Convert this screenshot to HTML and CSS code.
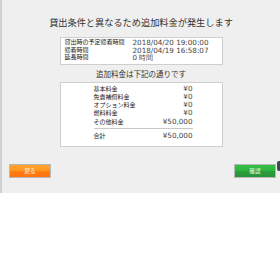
FILE: index.html
```html
<!DOCTYPE html>
<html lang="ja">
<head>
  <meta charset="utf-8">
  <meta name="viewport" content="width=device-width, initial-scale=1">
  <title>追加料金</title>
  <link rel="stylesheet" href="styles.css">
</head>
<body>
  <div class="panel">
    <h1 class="title">貸出条件と異なるため追加料金が発生します</h1>

    <div class="box time-box">
      <div class="time-row"><span>貸出時の予定帰着時間</span><span class="num">2018/04/20 19:00:00</span></div>
      <div class="time-row"><span>帰着時間</span><span class="num">2018/04/19 16:58:07</span></div>
      <div class="time-row"><span>延長時間</span><span class="num">0 時間</span></div>
    </div>

    <h2 class="subtitle">追加料金は下記の通りです</h2>

    <div class="box fee-box">
      <div class="fee-row"><span>基本料金</span><span class="num">¥0</span></div>
      <div class="fee-row"><span>免責補償料金</span><span class="num">¥0</span></div>
      <div class="fee-row"><span>オプション料金</span><span class="num">¥0</span></div>
      <div class="fee-row"><span>燃料料金</span><span class="num">¥0</span></div>
      <div class="fee-row"><span>その他料金</span><span class="num">¥50,000</span></div>
      <div class="fee-row total"><span>合計</span><span class="num">¥50,000</span></div>
    </div>

    <div class="actions">
      <button class="btn btn-back">戻る</button>
      <button class="btn btn-ok">確認</button>
    </div>

    <div class="side-tab"></div>
  </div>
</body>
</html>
```

FILE: styles.css
```css
body {
  margin: 0;
  background: #fff;
  font-family: "Liberation Sans", "Noto Sans CJK JP", sans-serif;
  color: #222;
}

.panel {
  position: relative;
  height: 193px;
  box-sizing: border-box;
  background: #efefef;
  border-left: 2px solid #d2d2d2;
  padding-top: 16px;
  display: flex;
  flex-direction: column;
  align-items: center;
}

.title {
  margin: 0;
  font-size: 9.2px;
  font-weight: normal;
  line-height: 14px;
  color: #333;
}

.box {
  width: 163px;
  box-sizing: border-box;
  background: #fff;
  border: 1px solid #cfcfcf;
}

.num {
  font-family: "DejaVu Sans", sans-serif;
  font-size: 7.2px;
  color: #444;
}

.time-box {
  margin-top: 7px;
  padding: 1px 4px 2px;
}

.time-row {
  display: grid;
  grid-template-columns: 68px 1fr;
  align-items: center;
  font-size: 6px;
  line-height: 7.5px;
  height: 7.5px;
}

.subtitle {
  margin: 4px 0 1px;
  font-size: 7.5px;
  font-weight: normal;
  line-height: 12px;
  color: #333;
}

.fee-box {
  padding: 2px 29px 2px 33px;
  height: 65px;
}

.fee-row {
  display: flex;
  justify-content: space-between;
  align-items: center;
  font-size: 6px;
  line-height: 8.3px;
  height: 8.3px;
}

.fee-row.total {
  margin-top: 2.5px;
  padding-top: 3px;
  border-top: 1px solid #c8c8c8;
}

.actions {
  align-self: stretch;
  display: flex;
  justify-content: space-between;
  margin-top: 17px;
  padding: 0 4px 0 7px;
}

.btn {
  width: 42px;
  height: 14px;
  padding: 0;
  border: 1px solid #b8b8b8;
  color: #fff;
  font-family: "Noto Sans CJK JP", sans-serif;
  font-size: 5.5px;
  line-height: 12px;
}

.btn-back {
  background: linear-gradient(#ffa22e 0%, #ff9a24 45%, #ff7c12 55%, #ff7410 100%);
}

.btn-ok {
  background: linear-gradient(#34bf46 0%, #2fb541 45%, #2a9c3a 55%, #27943a 100%);
}

.side-tab {
  position: absolute;
  right: 0;
  top: 161px;
  width: 3px;
  height: 10px;
  background: #3c4a58;
  border-radius: 2px 0 0 2px;
}
```
